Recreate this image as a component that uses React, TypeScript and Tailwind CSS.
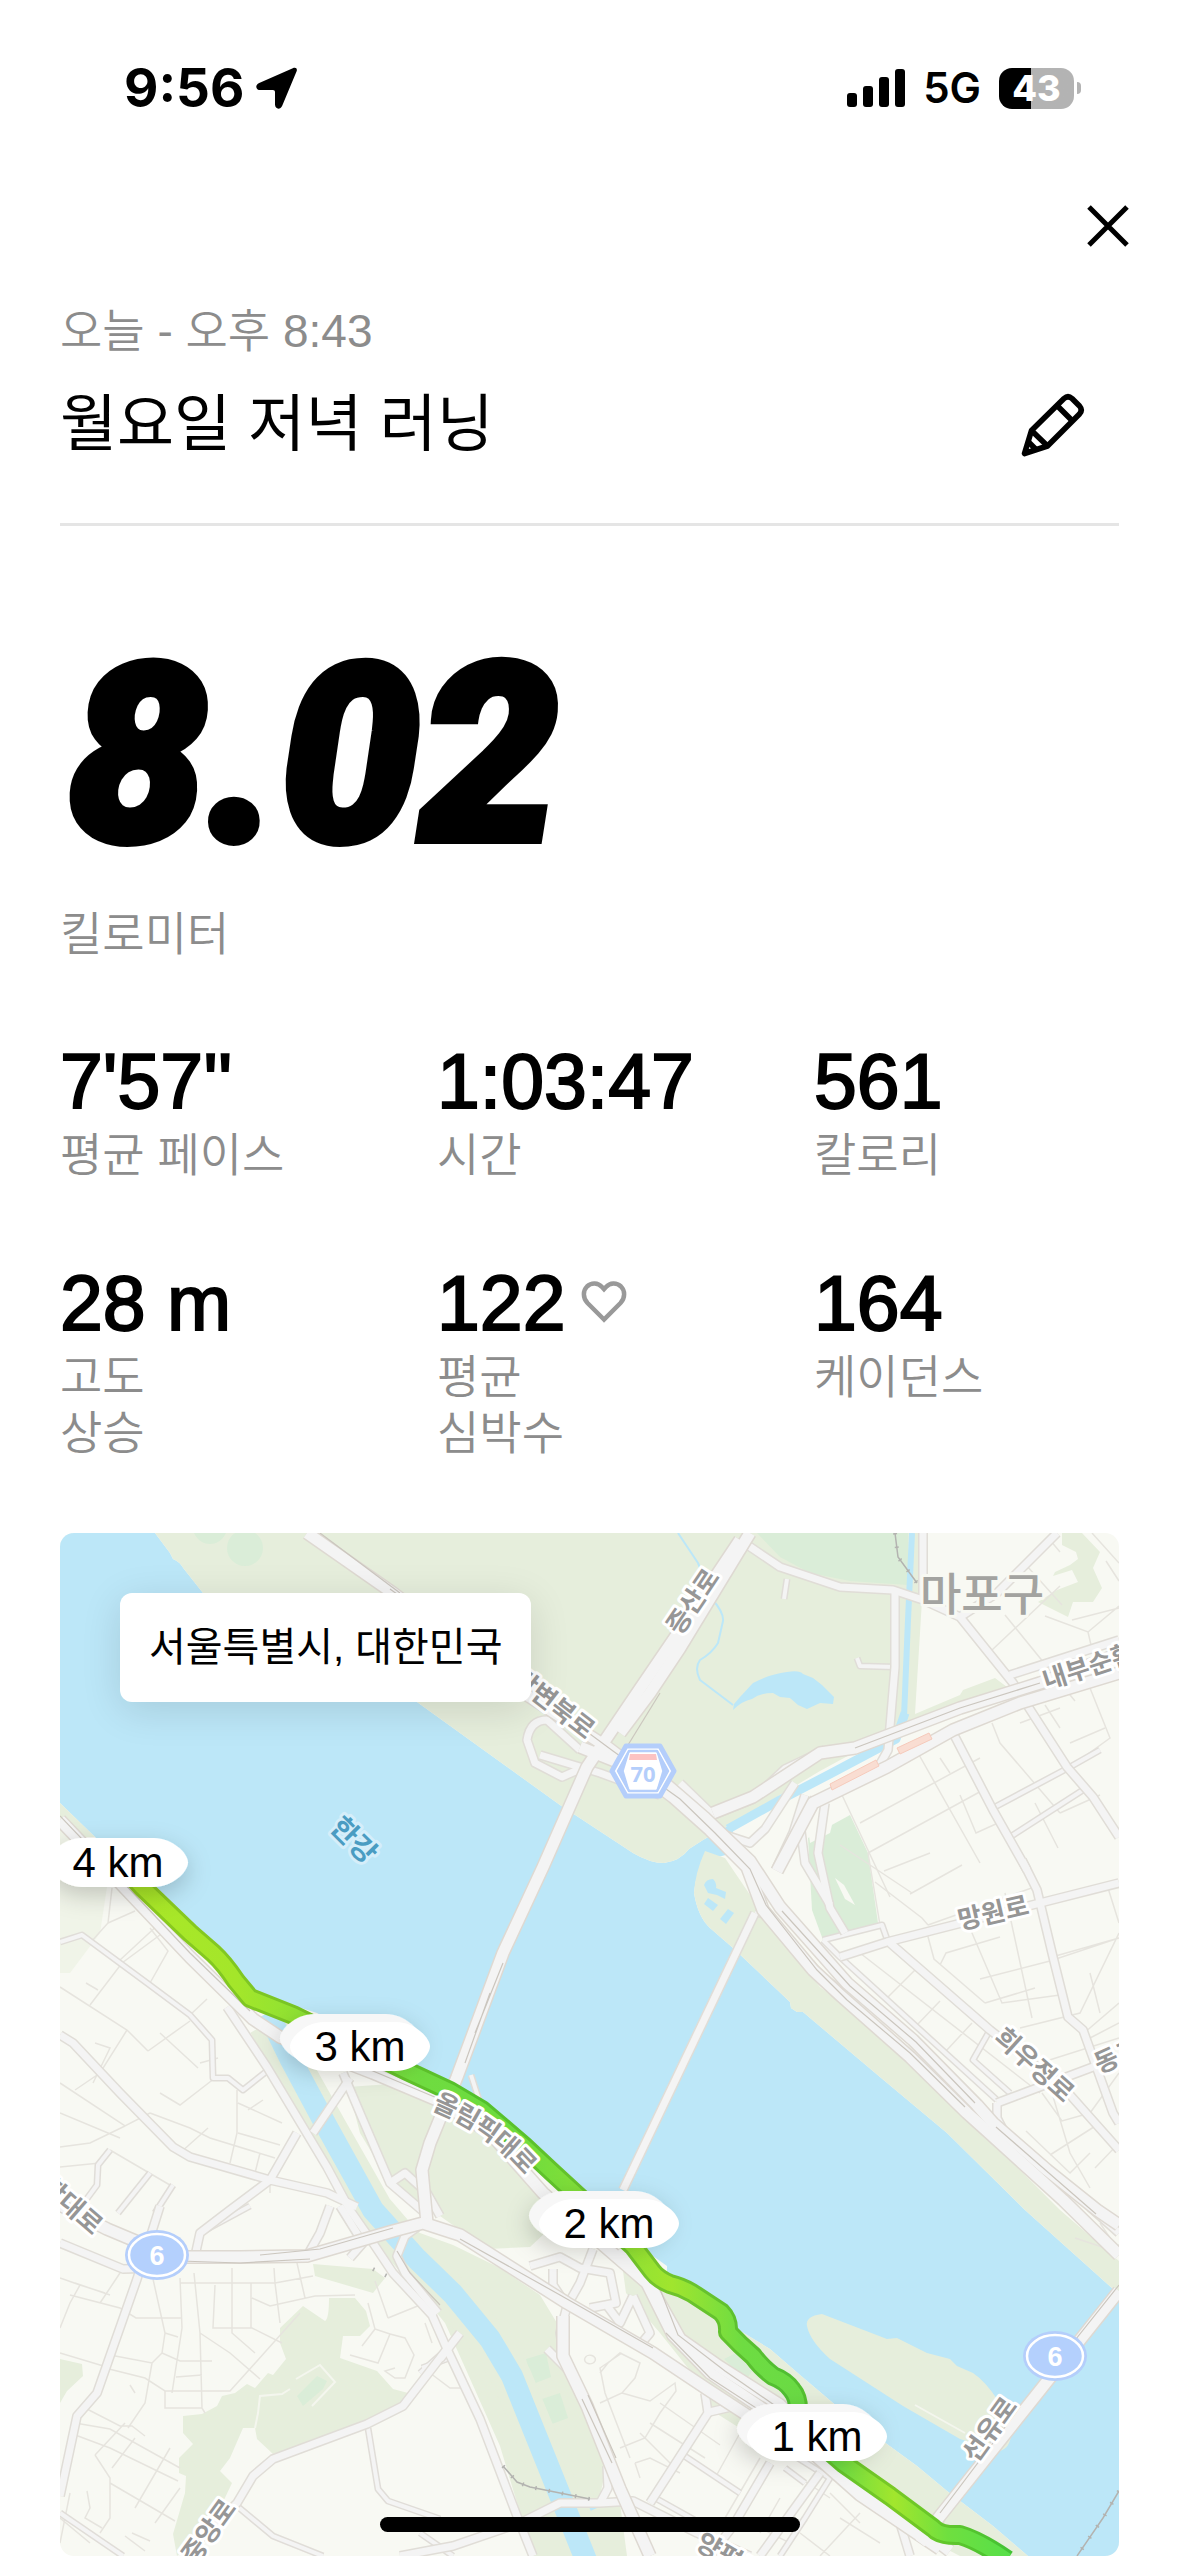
import { Fragment } from "react";

const textFont = "font-['Liberation_Sans','Noto_Sans_CJK_KR',sans-serif]";

interface Stat {
    value: string;
    label: string[];
    heart?: boolean;
}

const stats: Stat[] = [
    { value: "7'57''", label: ["평균 페이스"] },
    { value: "1:03:47", label: ["시간"] },
    { value: "561", label: ["칼로리"] },
    { value: "28 m", label: ["고도", "상승"] },
    { value: "122", label: ["평균", "심박수"], heart: true },
    { value: "164", label: ["케이던스"] },
];

/* ---------- Map data (map units, 1059 x 1023) ---------- */

const WATER = "#bce7f8";
const GREEN = "#e6eedc";
const PARK = "#daedd8";

const riverPath =
    "M0 0H95L110 20L113 26Q119 28 124 36L143 60L357 169L500 272L573 320Q590 330 604 330Q620 328 629 316L643 307L673 290V320L647 327Q635 340 634 360Q638 384 650 395L673 415L730 469L731 475L737 479L743 479L820 544L887 600L965 677L1053 756L1059 760V1023H968L933 993L887 958L857 933L820 906L773 870L740 842L710 816L677 796L660 780L607 742L607 733L593 723L540 690L515 652L470 614L427 577L393 554L360 537L257 480L193 460L93 354L35 304L0 270Z";

const greens = [
    // north bank park
    "M95 0L110 20L113 26Q119 28 124 36L143 60L357 169L500 272L573 320Q590 330 604 330Q620 328 629 316L643 307L673 290L720 262L760 238L830 200L947 154L935 145L903 157L900 162L855 181L860 100L866 0Z",
    // east bank
    "M645 318Q635 340 634 360Q638 384 650 395L673 415L730 469L731 475L737 479L743 479L820 544L887 600L965 677L1053 756L1059 760V728L1000 677L907 584L787 474L760 454L707 387L665 325Z",
    // left shore
    "M0 270L35 304L22 304L0 283Z",
    // interchange triangle and west side of the stream
    "M288 554L330 551L373 570L430 604L483 660L520 690L560 716L566 760L600 800L640 850L700 880L867 1006L900 1023H968L933 993L887 958L857 933L820 906L773 870L740 842L710 816L677 796L660 780L607 742L593 723L550 705L515 672L470 714L427 716L380 683L330 650L300 600Z",
    "M196 498L207 500L240 560L300 660L360 700L393 712L440 735L480 762L500 795L505 840L530 885L547 930L540 963L560 970L567 1023H473L440 913L403 830L385 790L340 735L300 677L240 565Z",
    "M580 812L600 822L650 850L690 880L720 912L700 908L640 870Z",
    // hill park in the south-west
    "M220 795L243 773L265 788Q269 786 269 765H295L306 778L310 793L300 803H283L280 825L317 838L333 856L348 860L340 873L303 891L213 921L197 906L195 895L183 895L170 925L160 938L172 950L153 990L117 1023L113 1001L125 960L126 943L119 940V925L133 911L123 900V883L142 881L157 873L162 863L175 860L187 851L195 855L208 840L213 842L226 826L220 810Z",
    "M0 826L22 831L23 843L7 858L0 870Z",
    "M253 731L313 736L325 745L313 760L255 743Z",
    // hill park in the north-east
    "M1002 0H1022L1040 19L1033 35L1042 55L1033 69H1013L1008 84L978 69L997 57L1018 49L1012 37L993 43L995 39L1010 32L1018 26L1016 19L1002 12Z",
    // island
    "M747 793Q745 783 762 781L827 806L837 805L867 820L890 826L897 833L913 840Q925 848 937 866L952 890L951 904Q948 918 937 918L900 906L843 873L770 826Q750 808 747 793Z",
];

const parks = [
    "M697 0H848V52L790 48L750 40L720 24Z",
    "M748 305L790 282L808 320L818 390L763 407L752 377Z",
    "M237 863L257 843L267 848L263 856L243 873Z",
    "M466 826L486 820L491 844L473 851Z",
    "M482 866L500 860L508 885L492 891Z",
    "M664 826L676 820L692 838L686 847Z",
];

const blocks = [
    "M709 300L725 296L720 312L712 330L700 322Z",
    "M733 290L742 300L741 330L730 334L722 322Z",
    "M745 272L765 262L775 280L770 300L750 310Z",
    "M775 345L784 352L795 372L785 366Z",
    "M520 808L545 790L610 822L650 862L640 880L600 950L560 940L530 870Z",
];

const ponds = [
    "M673 177L674 171L680 164L693 150Q710 141 727 139Q740 137 743 141L753 145L762 152L774 164L773 171L760 170L747 176L738 172L730 165L720 164L713 160Q700 160 692 166Q682 168 673 177Z",
    "M644 352Q646 346 653 346Q657 350 656 355L666 359L665 366L657 362L648 360Z",
    "M648 365L658 372L653 378L644 371Z",
    "M668 376L674 380L666 391L660 386Z",
];

/* Wide roads: drawn as a casing below a lighter fill */
const highways = [
    "M247 0L333 60L470 164L547 214L613 264L650 297L687 334L703 377L753 437L780 462L850 524L907 580L927 598L1003 667L1059 722",
    "M520 214L600 246L645 285L690 328L720 374L787 450L853 507L917 572L933 590L987 637L1037 677L1059 692",
    "M653 280L693 264L760 220L795 215L900 175L980 150L1059 121",
    "M717 338L753 270L827 234L893 197L960 170L1059 140",
    "M680 7L620 97L577 160L527 234L483 334L443 420L397 544L370 610L362 637L367 690",
    "M690 0L620 115L590 160L560 200",
    "M0 287L60 350L130 424L193 486L220 504L313 540L377 567L430 600L483 660L587 750L613 802L650 840L703 876L800 962L880 1016",
    "M560 716L592 756L620 806L660 834L720 872L800 950L890 1018",
    "M0 672L47 696L97 717L127 724H180L247 723L333 698L363 690L400 702L507 770L593 820L647 856L693 886L720 905",
    "M1059 758L880 983L860 1010",
    "M503 783V823L527 873L560 956L590 1023",
];

const roads = [
    "M680 7L720 34L780 54L833 57L863 67L900 84L953 150L1007 234L1033 264L1059 304",
    "M835 57V134L828 217L815 240",
    "M863 0V67",
    "M997 0L937 60L900 84",
    "M950 142L1059 107",
    "M520 217L487 187Q470 187 467 207L475 230L502 244L520 236",
    "M480 222L540 240L600 262",
    "M893 200L933 277L967 337",
    "M962 327L977 357L993 424L1008 484L1023 497L1053 580L1059 590",
    "M780 424L827 409L980 370L1059 350",
    "M830 410L930 497L1003 554L1059 617",
    "M937 570L953 564L1033 534L1059 524",
    "M937 570V585L950 610",
    "M695 380L563 657",
    "M620 250L653 282L693 266L725 236L765 217",
    "M650 297L690 310L705 296L735 250",
    "M717 334L733 300L745 262",
    "M765 270L758 320L770 375L785 400",
    "M755 265L740 290L745 330L770 372",
    "M0 502L13 510L60 560L113 614L130 624L210 647L267 660L297 674",
    "M167 474L207 534L243 594L267 634L290 677L313 710L333 740L372 782L387 816L420 886L457 983L473 1023",
    "M237 600L210 647L170 677L140 700L135 723",
    "M0 710L63 736L97 735",
    "M100 673L77 746L37 860L17 883L0 963",
    "M387 816L343 873L307 891L213 926L193 943L177 970L123 1023",
    "M380 826L400 800",
    "M340 1023L393 1013L460 990L500 970L540 970L573 968L637 1000L690 1023",
    "M363 690L345 703L337 723L345 740L378 780",
    "M270 673L260 700L247 723",
    "M280 673L303 710L290 725",
    "M330 650L345 640L367 660L380 683",
    "M253 600L280 560L290 545",
    "M283 540L300 580L330 650L365 680",
    "M533 716L520 750L507 773L500 800L505 830",
    "M470 733L500 724L520 735L550 740L556 770L530 775",
    "M493 736V752L507 773",
    "M573 763L560 790L545 770",
    "M573 763L590 800L580 812",
    "M645 860L648 880L590 970",
    "M645 880L680 872",
    "M710 930L673 993L650 1023",
    "M487 816L507 836",
    "M820 966L840 990L850 1023",
    "M760 940L700 1023",
    "M547 933L548 955L540 970",
    "M750 430L762 445L785 460",
    "M1030 674L1059 700",
];

const streets = [
    "M797 125L800 133L835 134",
    "M727 46L724 66",
    "M933 275L1010 234L1040 217",
    "M950 304L1023 257",
    "M763 407L822 392L828 409",
    "M763 407L780 424L937 567",
    "M930 497L913 527L950 560",
    "M695 380L703 382",
    "M0 409L22 402L87 450L130 482L152 507L153 545H168L183 557L207 538",
    "M50 617L38 632L37 652L20 675",
    "M90 640L58 680",
    "M113 652L95 680",
    "M140 700L190 673",
    "M0 980L63 1023",
    "M177 973L213 1003L263 1023",
    "M308 895L318 956L328 968L380 986",
    "M360 1000L393 1023",
    "M411 542L420 570L440 585",
    "M620 920L680 960",
    "M597 966L640 990",
    "M730 920L770 945L745 985L720 1023",
    "M725 935L745 950",
    "M387 816L360 840",
    "M392 824L362 835",
];

const alleys = [
    "M932 117L1000 53M945 82L1015 168M966 32L1002 72M1012 87L1059 75M985 83L1028 99L1059 73M1028 99L1031 112M1032 0L1059 30M1046 28L1059 48M990 7L1000 19",
    "M985 172L1000 195M1030 155L1050 205L1010 234M960 190L1000 175M1010 210L1045 195",
    "M782 262L830 364M858 220L920 330M932 190L940 210L1000 280M800 290L920 225M808 320L925 256M824 338L870 320M900 262L916 300L938 290M880 225L890 240M975 270L998 315M1000 280L1040 262M955 315L975 345",
    "M808 320L820 392M815 349L862 385L868 392M780 312L852 360M850 361L902 332M868 392L980 352M906 386L942 470L1000 462M945 360L972 485M920 446L990 428L1059 405M925 470L975 455M992 424L1059 405M880 432L886 420L940 404M867 400L874 426L925 470M800 420L980 560M855 437L828 464M880 468L857 492M912 490L886 518M960 495L1020 480L1059 400M1024 500L1059 470M1030 505L1059 490M1040 480L1030 440M980 530L1059 505",
    "M966 598L1010 640L1030 620M982 560L1002 588L1030 580L1059 540M992 560L1010 620L1030 655M1035 635L1059 610M990 622L1040 590M1048 355L1059 390",
    "M52 355L48 390L30 410M48 390L75 378M60 427L100 390M30 472L62 430L108 396M90 450L108 418L90 395M130 482L147 466M26 450L38 457M0 454L67 497L88 518M88 518L130 488M100 500L138 535M140 530L158 525M67 497L40 540L15 557M35 510L50 515L33 550",
    "M0 550L65 593L90 580M100 560L120 572L155 545M65 593L30 610L0 614M0 580L60 605M90 580L130 595L150 605L215 625M120 620L148 595M177 557V600L170 630M178 570L222 590M178 600L220 612M188 577L203 567M0 634L40 630M50 617L115 655M210 647V660M195 640L200 620",
    "M0 745L20 752L45 760M20 752L10 770L0 795M15 750L50 762M40 770L60 740M10 762L60 775L76 785H122M93 746L105 800L102 820L120 828H152M105 800L118 804M120 745L122 795L112 860M134 740L140 800L142 875M120 750H160L215 750L253 743M155 752L153 795H192L222 810M172 735V800L195 820M191 750V795M192 765L210 773L255 763L295 762M214 735L215 750L220 790M237 730L245 765M140 800L170 820L200 846M50 822L92 830L102 820M45 835L85 845L105 858H170L240 780M116 844L142 842M105 858V875H142L145 880M70 852L75 860M92 830L85 870L68 895M0 820L50 835M25 875L60 893H72L85 903M15 890L50 896L120 935M10 900L50 915L118 948M35 922L65 890M35 922L50 945V985L40 1000M50 950L115 988M52 935L75 905M75 975L110 915M95 990L120 955M10 960L0 1010M27 958L30 975L25 985L42 995M315 796L330 801L318 830L290 822M330 801L345 805L354 822L345 845L335 845L325 838L335 835M302 813L315 796L308 770M315 748L328 785M328 785L365 770M65 1003L85 1018M72 1000L90 1008",
    "M440 733L460 745M540 840L548 830L560 820L580 830L575 845L562 860L540 870M562 860L590 868L615 850L616 858L600 880L585 905L560 915M562 820L540 835L545 860L570 925M600 870L660 912M590 890L645 925M580 900L615 935M575 930L590 925L620 940M575 930L580 945M680 900L655 945M610 830L640 858M700 925L665 985M720 965L700 1000M690 990L730 1010M740 945L770 965M800 980L760 1023M770 960L800 990M780 985L820 1010M740 1000L770 1023M365 790L372 810M370 840L390 855H403M0 985L30 1010M525 825A5 4 0 1 0 535 828A5 4 0 1 0 525 825",
    "M1015 705L1045 715L1059 712M1040 690L1050 705",
];

/* Elevated roads keep a darker middle line */
const dividers = [
    "M260 0L340 60M330 56L480 164L553 218L620 266L655 300L690 336L706 372L757 437L787 467",
    "M787 467L850 520L905 574M722 378L790 453L856 509L915 570M936 594L990 641L1036 681",
    "M795 215L900 175L980 150",
    "M600 160L560 225",
    "M430 460L405 530M443 430L415 500",
    "M0 283L60 346L130 420L190 478M230 507L313 538L377 565",
    "M200 722L260 716L333 695M120 728L180 730L250 726",
    "M600 756L618 802L665 838L720 876M606 800L650 845L710 884",
    "M522 866L552 930M528 862L556 925",
    "M337 718L350 740L380 772",
    "M880 980L960 874M1000 826L1059 752",
    "M400 706L500 762L593 815",
];

interface Label {
    text: string;
    x: number;
    y: number;
    rotate: number;
}

const roadLabels: Label[] = [
    { text: "증산로", x: 632, y: 68, rotate: -56 },
    { text: "강변북로", x: 494, y: 170, rotate: 38 },
    { text: "내부순환로", x: 1040, y: 129, rotate: -18 },
    { text: "망원로", x: 933, y: 379, rotate: -13 },
    { text: "희우정로", x: 975, y: 531, rotate: 42 },
    { text: "동교로", x: 1068, y: 517, rotate: -24 },
    { text: "공항대로", x: 3, y: 664, rotate: 41 },
    { text: "중앙로", x: 148, y: 998, rotate: -54 },
    { text: "양평로", x: 670, y: 1024, rotate: 30 },
    { text: "선유로", x: 929, y: 896, rotate: -54 },
];

interface Pin {
    label: string;
    x: number;
    y: number;
    stacked?: boolean;
}

const pins: Pin[] = [
    { label: "4 km", x: 58, y: 305 },
    { label: "3 km", x: 300, y: 489, stacked: true },
    { label: "2 km", x: 549, y: 666, stacked: true },
    { label: "1 km", x: 757, y: 879, stacked: true },
];

const routePath =
    "M60 330L82 354L130 400L153 420Q164 430 176 448L190 465L233 482L290 510L347 538L390 558L422 577L463 612L493 640L530 674L573 713L592 738Q598 746 610 751Q622 754 632 760L661 779Q669 787 668 799Q680 812 693 823Q702 835 713 843Q726 848 732 857Q738 864 738 876L760 910L783 930L830 963L873 995Q880 1003 900 1002Q920 1008 947 1027";

/* ---------- Icons ---------- */

function LocationArrow() {
    return (
        <svg viewBox="0 0 42 42" className="h-[42px] w-[42px]" aria-hidden="true">
            <path d="M36.800 1.200C39.900-.2 41.800 1.700 40.400 4.800L26.200 38.800C24.300 43.400 19 42.300 19 37.600V25.200C19 23.900 18.200 23.100 16.900 23.100H4.500C-.3 23.100-1.400 17.900 3.200 15.900Z" />
        </svg>
    );
}

function SignalBars() {
    return (
        <svg viewBox="0 0 58 38" className="h-[38px] w-[58px]" aria-hidden="true">
            <rect x="0" y="24" width="10" height="14" rx="3" />
            <rect x="16" y="17" width="10" height="21" rx="3" />
            <rect x="32" y="8" width="10" height="30" rx="3" />
            <rect x="48" y="0" width="10" height="38" rx="3" />
        </svg>
    );
}

function Battery() {
    return (
        <div className="flex items-center gap-[3px]">
            <div className="flex h-[41px] w-[75px] items-center justify-center rounded-[13px] bg-linear-to-r from-black from-43% to-[#b3b3b3] to-43% font-['Inter',sans-serif] text-[36px] leading-none font-extrabold text-white">
                43
            </div>
            <div className="h-[12px] w-[4px] rounded-r-full bg-[#b3b3b3]" />
        </div>
    );
}

function CloseIcon() {
    return (
        <svg viewBox="0 0 42 42" className="h-[42px] w-[42px]" fill="none" stroke="currentColor" strokeWidth="5" aria-hidden="true">
            <path d="M2 2L40 40M40 2L2 40" />
        </svg>
    );
}

function PencilIcon() {
    return (
        <svg viewBox="0 0 64 64" className="h-[64px] w-[64px]" fill="none" stroke="currentColor" strokeWidth="5.600" strokeLinejoin="round" aria-hidden="true">
            <path d="M3.500 60.500L10.500 37.500L43 5.500Q47 2 51 5.500L58.500 13Q62 17 58.500 21L26.500 53Z" />
            <path d="M36 12.500L51.500 28M10.500 37.500L26.500 53M7.500 49L15 56.500" />
        </svg>
    );
}

function HeartIcon() {
    return (
        <svg viewBox="0 3 46 44" className="h-[44px] w-[46px]" fill="none" stroke="#999999" strokeWidth="4.500" aria-label="심박수" role="img">
            <path d="M23 41.500L6.500 25C1.500 19.500 2 12.500 6 8.500C10.500 4.300 17 4.700 21 9L23 11.200L25 9C29 4.700 35.500 4.300 40 8.500C44 12.500 44.500 19.500 39.500 25Z" />
        </svg>
    );
}

/* ---------- Map ---------- */

function RoadLayer({ paths, casing, width, color = "#d9d5cf" }: { paths: string[]; casing: number; width: number; color?: string }) {
    return (
        <g fill="none" strokeLinejoin="round">
            <g stroke={color} strokeWidth={casing}>
                {paths.map((d) => (
                    <path key={d} d={d} />
                ))}
            </g>
            <g stroke="#f4f4f4" strokeWidth={width}>
                {paths.map((d) => (
                    <path key={d} d={d} />
                ))}
            </g>
        </g>
    );
}

function RouteShield({ x, y }: { x: number; y: number }) {
    return (
        <g transform={`translate(${x} ${y})`}>
            <ellipse rx="32" ry="25" fill="#b4cefb" />
            <ellipse rx="28" ry="21" fill="#b4d0fd" stroke="#ffffff" strokeWidth="2.500" />
            <text y="10" textAnchor="middle" fontSize="27" fontWeight="700" fill="#ffffff" fontFamily="Liberation Sans, sans-serif">
                6
            </text>
        </g>
    );
}

function CityHighwayShield({ x, y }: { x: number; y: number }) {
    return (
        <g transform={`translate(${x} ${y})`} strokeLinejoin="round">
            <path d="M-17 -25H17L31 0L17 25H-17L-31 0Z" fill="#ffffff" stroke="#b4cefb" strokeWidth="5" />
            <path d="M-14 -20H14L25 0L14 20H-14L-25 0Z" fill="#ffffff" stroke="#b4cefb" strokeWidth="2.500" />
            <path d="M-14 -20L-25 0L-14 20L-20 0Z M14 -20L25 0L14 20L20 0Z" fill="#b4cefb" stroke="#b4cefb" strokeWidth="1.500" />
            <path d="M-13 -17H13L14 -11H-14Z" fill="#fcc3c3" />
            <text y="11" textAnchor="middle" fontSize="22" fontWeight="700" fill="#b4cefb" fontFamily="Open Sans, sans-serif">
                70
            </text>
        </g>
    );
}

function DistancePin({ pin }: { pin: Pin }) {
    const shape = "M34 0H106C124 0 140 15 140 24.500C140 34 124 49 106 49H34C16 49 0 34 0 24.500C0 15 16 0 34 0Z";
    return (
        <g transform={`translate(${pin.x - 70} ${pin.y})`}>
            {pin.stacked && <path d={shape} transform="translate(-10 -8)" fill="#f7f7f7" filter="url(#pin-shadow)" />}
            <path d={shape} fill="#ffffff" filter={pin.stacked ? undefined : "url(#pin-shadow)"} />
            <text x="70" y="39" textAnchor="middle" fontSize="42" fill="#000000" fontFamily="Liberation Sans, sans-serif">
                {pin.label}
            </text>
        </g>
    );
}

function RunMap() {
    return (
        <svg viewBox="0 0 1059 1023" className="block h-auto w-full" role="img" aria-label="러닝 경로">
            <defs>
                <linearGradient id="pace" gradientUnits="userSpaceOnUse" x1="60" y1="0" x2="950" y2="0">
                    <stop offset="0" stopColor="#abe827" />
                    <stop offset="0.13" stopColor="#a4e62a" />
                    <stop offset="0.2" stopColor="#8fe233" />
                    <stop offset="0.34" stopColor="#6fdc40" />
                    <stop offset="0.44" stopColor="#6cdb3e" />
                    <stop offset="0.52" stopColor="#82df38" />
                    <stop offset="0.62" stopColor="#a0e52e" />
                    <stop offset="0.7" stopColor="#6edc42" />
                    <stop offset="0.8" stopColor="#67da45" />
                    <stop offset="0.87" stopColor="#a2e62d" />
                    <stop offset="0.93" stopColor="#6fdf3f" />
                    <stop offset="1" stopColor="#57df49" />
                </linearGradient>
                <linearGradient id="pace-edge" gradientUnits="userSpaceOnUse" x1="60" y1="0" x2="950" y2="0">
                    <stop offset="0" stopColor="#8fcb1c" />
                    <stop offset="0.2" stopColor="#78c525" />
                    <stop offset="0.4" stopColor="#52c02c" />
                    <stop offset="0.6" stopColor="#74c42a" />
                    <stop offset="0.75" stopColor="#4fbe32" />
                    <stop offset="0.87" stopColor="#79c924" />
                    <stop offset="1" stopColor="#42c234" />
                </linearGradient>
                <filter id="pin-shadow" x="-40%" y="-80%" width="180%" height="280%">
                    <feDropShadow dx="0" dy="8" stdDeviation="12" floodColor="#000000" floodOpacity="0.2" />
                </filter>
                <path id="olympic" d="M364 563Q432 586 480 645" />
            </defs>

            <rect width="1059" height="1023" fill="#f8f9f3" />
            <path d="M0 283L47 354L40 400L10 440L0 440Z" fill="#f0f4e8" />
            <path d={riverPath} fill={WATER} />
            <g fill={GREEN}>
                {greens.map((d) => (
                    <path key={d} d={d} />
                ))}
            </g>
            <g fill={PARK}>
                {parks.map((d) => (
                    <path key={d} d={d} />
                ))}
                <circle cx="150" cy="-6" r="17" />
                <circle cx="185" cy="15" r="18" />
            </g>
            <g fill="#f8f9f3">
                {blocks.map((d) => (
                    <path key={d} d={d} />
                ))}
            </g>

            {/* streams and ponds */}
            <g fill="none" stroke={WATER} strokeLinejoin="round">
                <path d="M208 490L230 530L267 596L313 677L357 728L393 765L430 808L452 845L483 920L526 1027" stroke={GREEN} strokeWidth="40" />
                <path d="M208 480L230 525L267 594L313 677L357 726L393 761L430 806L452 843L483 920L526 1027" strokeWidth="22" />
                <path d="M852 0L848 87L844 184" strokeWidth="6" />
                <path d="M845 180L836 206L770 241L720 267L668 296" strokeWidth="9" />
                <path d="M618 0L638 30L653 67Q664 80 663 88L658 110Q652 120 640 127Q634 135 640 147L673 172" strokeWidth="2" />
                <path d="M530 976L546 969" strokeWidth="4" />
            </g>
            <g fill={WATER}>
                {ponds.map((d) => (
                    <path key={d} d={d} />
                ))}
            </g>

            {/* streets, smallest first */}
            <g fill="none" stroke="#e6e4de" strokeWidth="1.500">
                {alleys.map((d) => (
                    <path key={d} d={d} />
                ))}
            </g>
            <g fill="none" stroke="#f4f6ee" strokeWidth="2">
                <path d="M195 895L198 880L200 863L222 861L230 856M236 846L260 832L275 849L252 873M855 872L905 900" />
            </g>
            <RoadLayer paths={streets} casing={7} width={4} color="#e0ddd8" />
            <RoadLayer paths={roads} casing={10} width={7} color="#e0ddd7" />
            <RoadLayer paths={highways} casing={14} width={11} color="#ded9d2" />
            <g fill="none" stroke="#cbc6be" strokeWidth="1.200">
                {dividers.map((d) => (
                    <path key={d} d={d} />
                ))}
            </g>

            {/* stations */}
            <g fill="#f9ddd2" stroke="#f6cabb">
                <path d="M770 251L816 227L819 233L772 257Z" />
                <path d="M837 215L869 200L872 206L840 221Z" />
            </g>

            {/* railways */}
            <g fill="none" stroke="#b3b3b0" strokeWidth="1.500">
                <path d="M835 0L838 24L857 50M443 933L457 949L470 954L530 966M1059 958L1043 985L1017 1023" />
                <path d="M835 0L838 24L857 50M443 933L457 949L470 954L530 966M1059 958L1043 985L1017 1023M313 736L337 748" strokeWidth="4" strokeDasharray="1.500 12" />
            </g>

            {/* run */}
            <g fill="none" strokeLinejoin="round">
                <path d={routePath} stroke="url(#pace-edge)" strokeWidth="20" />
                <path d={routePath} stroke="url(#pace)" strokeWidth="14" />
            </g>

            <g
                fill="#969696"
                stroke="#ffffff"
                strokeWidth="6"
                strokeLinejoin="round"
                paintOrder="stroke"
                fontFamily="Noto Sans CJK KR, sans-serif"
                fontSize="26"
                fontWeight="700"
                textAnchor="middle"
            >
                {roadLabels.map((l) => (
                    <text key={l.text} transform={`translate(${l.x} ${l.y}) rotate(${l.rotate})`} y="10">
                        {l.text}
                    </text>
                ))}
                <text dy="10">
                    <textPath href="#olympic" startOffset="50%">
                        올림픽대로
                    </textPath>
                </text>
                <text x="922" y="78" fontSize="45" fontWeight="500" fill="#a3a3a0" stroke="#f8f9f3">
                    마포구
                </text>
                <text transform="translate(294 307) rotate(45)" y="10" fontSize="28" fill="#4a9cc2" stroke="#d5eefa">
                    한강
                </text>
            </g>

            <CityHighwayShield x={583} y={238} />
            <RouteShield x={97} y={722} />
            <RouteShield x={995} y={823} />

            {pins.map((pin) => (
                <DistancePin key={pin.label} pin={pin} />
            ))}
        </svg>
    );
}

/* ---------- Page ---------- */

function StatusBar() {
    return (
        <div className="flex h-44 items-center justify-between pr-[98px] pl-[124px]">
            <div className="flex items-center gap-3">
                <span className="font-['Inter',sans-serif] text-[53px] leading-none font-bold">9:56</span>
                <LocationArrow />
            </div>
            <div className="flex items-center gap-[18px]">
                <SignalBars />
                <span className="font-['Inter',sans-serif] text-[42px] leading-none font-semibold">5G</span>
                <Battery />
            </div>
        </div>
    );
}

function StatItem({ stat }: { stat: Stat }) {
    return (
        <div className="flex flex-col">
            <dd className="order-first flex items-center gap-4 text-[77px] leading-[92px] whitespace-nowrap [-webkit-text-stroke:2px_black]">
                {stat.value}
                {stat.heart && <HeartIcon />}
            </dd>
            <dt className="text-[46px] leading-[56px] font-[350] text-[#8c8c8c]">
                {stat.label.map((line, i) => (
                    <Fragment key={line}>
                        {i > 0 && <br />}
                        {line}
                    </Fragment>
                ))}
            </dt>
        </div>
    );
}

export default function App() {
    return (
        <div className={`relative h-screen overflow-hidden bg-white text-black ${textFont}`}>
            <StatusBar />

            <div className="flex h-[100px] items-center justify-end pr-[50px]">
                <button type="button" aria-label="닫기">
                    <CloseIcon />
                </button>
            </div>

            <main className="px-[60px]">
                <header className="border-b-3 border-[#e5e5e5] pt-[27px] pb-[58px]">
                    <p className="text-[46px] leading-[56px] font-[350] text-[#8c8c8c]">오늘 - 오후 8:43</p>
                    <div className="mt-[26px] flex items-center justify-between pr-[34px]">
                        <h1 className="text-[62px] leading-[80px]">월요일 저녁 러닝</h1>
                        <button type="button" aria-label="이름 수정">
                            <PencilIcon />
                        </button>
                    </div>
                </header>

                <section className="pt-[130px]">
                    <p className="pl-2 font-['Roboto',sans-serif] text-[248px] leading-[200px] font-black italic [-webkit-text-stroke:8px_black]">
                        8.02
                    </p>
                    <p className="mt-[50px] text-[46px] leading-[56px] font-[350] text-[#8c8c8c]">킬로미터</p>
                </section>

                <dl className="mt-[73px] grid grid-cols-3 gap-x-[72px] gap-y-[74px]">
                    {stats.map((stat) => (
                        <StatItem key={stat.label.join(" ")} stat={stat} />
                    ))}
                </dl>

                <section className="relative mt-[72px] overflow-hidden rounded-[14px]">
                    <RunMap />
                    <div className="absolute top-[60px] left-[60px] rounded-xl bg-white px-[29px] py-[26px] text-[40px] leading-[57px] shadow-[0_8px_40px_rgba(0,0,0,0.12)]">
                        서울특별시, 대한민국
                    </div>
                </section>
            </main>

            <div className="absolute inset-x-0 bottom-6 flex justify-center">
                <div className="h-[15px] w-[420px] rounded-full bg-black" />
            </div>
        </div>
    );
}
